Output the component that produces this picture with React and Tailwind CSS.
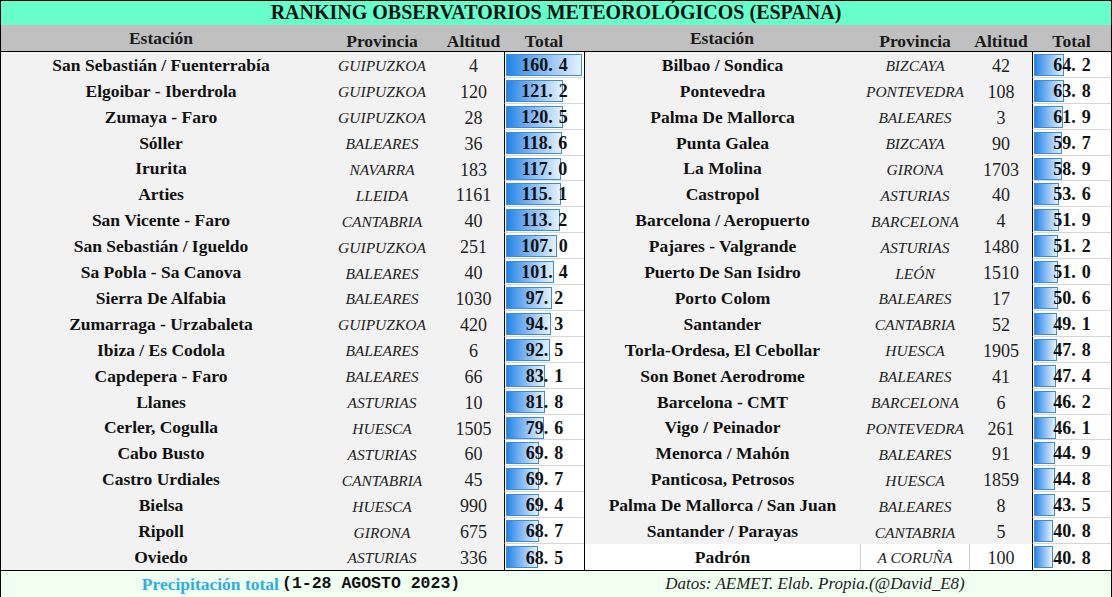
const left = [
  ['San Sebastián / Fuenterrabía', 'GUIPUZKOA', '4', 160.4],
  ['Elgoibar - Iberdrola', 'GUIPUZKOA', '120', 121.2],
  ['Zumaya - Faro', 'GUIPUZKOA', '28', 120.5],
  ['Sóller', 'BALEARES', '36', 118.6],
  ['Irurita', 'NAVARRA', '183', 117.0],
  ['Arties', 'LLEIDA', '1161', 115.1],
  ['San Vicente - Faro', 'CANTABRIA', '40', 113.2],
  ['San Sebastián / Igueldo', 'GUIPUZKOA', '251', 107.0],
  ['Sa Pobla - Sa Canova', 'BALEARES', '40', 101.4],
  ['Sierra De Alfabia', 'BALEARES', '1030', 97.2],
  ['Zumarraga - Urzabaleta', 'GUIPUZKOA', '420', 94.3],
  ['Ibiza / Es Codola', 'BALEARES', '6', 92.5],
  ['Capdepera - Faro', 'BALEARES', '66', 83.1],
  ['Llanes', 'ASTURIAS', '10', 81.8],
  ['Cerler, Cogulla', 'HUESCA', '1505', 79.6],
  ['Cabo Busto', 'ASTURIAS', '60', 69.8],
  ['Castro Urdiales', 'CANTABRIA', '45', 69.7],
  ['Bielsa', 'HUESCA', '990', 69.4],
  ['Ripoll', 'GIRONA', '675', 68.7],
  ['Oviedo', 'ASTURIAS', '336', 68.5],
];

const right = [
  ['Bilbao / Sondica', 'BIZCAYA', '42', 64.2],
  ['Pontevedra', 'PONTEVEDRA', '108', 63.8],
  ['Palma De Mallorca', 'BALEARES', '3', 61.9],
  ['Punta Galea', 'BIZCAYA', '90', 59.7],
  ['La Molina', 'GIRONA', '1703', 58.9],
  ['Castropol', 'ASTURIAS', '40', 53.6],
  ['Barcelona / Aeropuerto', 'BARCELONA', '4', 51.9],
  ['Pajares - Valgrande', 'ASTURIAS', '1480', 51.2],
  ['Puerto De San Isidro', 'LEÓN', '1510', 51.0],
  ['Porto Colom', 'BALEARES', '17', 50.6],
  ['Santander', 'CANTABRIA', '52', 49.1],
  ['Torla-Ordesa, El Cebollar', 'HUESCA', '1905', 47.8],
  ['Son Bonet Aerodrome', 'BALEARES', '41', 47.4],
  ['Barcelona - CMT', 'BARCELONA', '6', 46.2],
  ['Vigo / Peinador', 'PONTEVEDRA', '261', 46.1],
  ['Menorca / Mahón', 'BALEARES', '91', 44.9],
  ['Panticosa, Petrosos', 'HUESCA', '1859', 44.8],
  ['Palma De Mallorca / San Juan', 'BALEARES', '8', 43.5],
  ['Santander / Parayas', 'CANTABRIA', '5', 40.8],
  ['Padrón', 'A CORUÑA', '100', 40.8],
];

const serif = "font-['Liberation_Serif',serif]";

function Total({ value, last }) {
  const [int, dec] = value.toFixed(1).split('.');
  const w = Math.round((value / 160.4) * 76);
  return (
    <div
      className={`relative flex items-center justify-center bg-white border-l border-black ${last ? '' : 'border-b border-b-[#d6d6d6]'}`}
    >
      <div
        className="absolute left-px top-[2px] h-[22px] border border-[#3b8ed6] bg-linear-to-r from-[#1a84e5] to-[#e4f1fd]"
        style={{ width: w }}
      />
      <span className={`relative pt-[2px] ${serif} text-[18px] font-bold text-[#111]`}>
        {int}.<span className="ml-[6px]">{dec}</span>
      </span>
    </div>
  );
}

function Cells({ row, last, edge, white }) {
  const bg = white ? 'bg-white' : 'bg-[#f2f2f2]';
  return (
    <>
      <div className={`${bg} flex items-center justify-center ${serif} text-[17.5px] font-bold text-[#111] ${edge ? 'border-l border-black' : ''}`}>
        {row[0]}
      </div>
      <div className={`${bg} flex items-center justify-center pt-[2px] ${serif} italic text-[15.5px] text-[#222] ${white ? 'border-l border-r border-[#d0d0d0]' : ''}`}>
        {row[1]}
      </div>
      <div className={`${bg} flex items-center justify-center ${serif} text-[18px] text-[#222] pt-[3px]`}>
        {row[2]}
      </div>
      <Total value={row[3]} last={last} />
    </>
  );
}

export default function App() {
  const cols = 'grid grid-cols-[320px_122px_61px_80px_276px_110px_62px_79px]';
  return (
    <div className="w-[1112px] h-[597px] border border-black bg-white flex flex-col text-[#111]">
      <div className={`h-[24px] pb-[2px] bg-[#66ffcc] flex items-center justify-center ${serif} text-[20px] font-bold`}>
        RANKING OBSERVATORIOS METEOROLÓGICOS (ESPANA)
      </div>
      <div className={`${cols} h-[27px] bg-[#c0c0c0] border-b border-black ${serif} text-[17.5px] font-bold text-[#1a1a1a]`}>
        <div className="flex items-center justify-center pb-[3px]">Estación</div>
        <div className="flex items-center justify-center pt-[2px]">Provincia</div>
        <div className="flex items-center justify-center pt-[2px]">Altitud</div>
        <div className="flex items-center justify-center pt-[2px]">Total</div>
        <div className="flex items-center justify-center pb-[3px]">Estación</div>
        <div className="flex items-center justify-center pt-[2px]">Provincia</div>
        <div className="flex items-center justify-center pt-[2px]">Altitud</div>
        <div className="flex items-center justify-center pt-[2px]">Total</div>
      </div>
      <div className={`${cols} h-[518px] grid-rows-[repeat(20,minmax(0,1fr))]`}>
        {left.flatMap((row, i) => [
          <Cells key={'l' + i} row={row} last={i === 19} edge={false} />,
          <Cells key={'r' + i} row={right[i]} last={i === 19} edge={true} white={i === 19} />,
        ])}
      </div>
      <div className="flex-1 flex items-center border-t border-black bg-[#effff0]">
        <div className="w-[600px] flex items-center justify-center">
          <span className={`${serif} text-[17.5px] font-bold text-[#2fade0]`}>Precipitación total</span>
          <span className="ml-[3px] font-['Liberation_Mono',monospace] text-[16.5px] font-bold">(1-28 AGOSTO 2023)</span>
        </div>
        <div className={`flex-1 pr-[82px] text-center ${serif} italic text-[17px] text-[#222]`}>
          Datos: AEMET. Elab. Propia.(@David_E8)
        </div>
      </div>
    </div>
  );
}
